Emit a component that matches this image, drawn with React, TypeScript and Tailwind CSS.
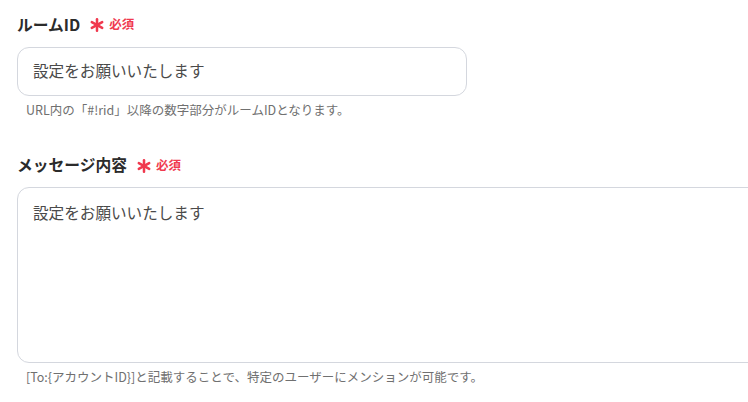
import React from "react"

const FONT = { fontFamily: '"Noto Sans CJK JP", "Noto Sans", sans-serif' }

function Required() {
  return (
    <span className="ml-[10px] flex items-center gap-[5px] text-[#f0394e]">
      <svg width="14" height="14" viewBox="0 0 14 14" className="mt-[1px]">
        <g stroke="currentColor" strokeWidth="2.5" strokeLinecap="round">
          <line x1="7" y1="1.2" x2="7" y2="12.8" />
          <line x1="1.8" y1="4.1" x2="12.2" y2="9.9" />
          <line x1="1.8" y1="9.9" x2="12.2" y2="4.1" />
        </g>
      </svg>
      <span className="text-[12.5px] font-bold">必須</span>
    </span>
  )
}

function Label({ text }: { text: string }) {
  return (
    <div className="flex items-center">
      <span className="text-[15.75px] font-bold text-[#2b2b2b]">{text}</span>
      <Required />
    </div>
  )
}

export default function App() {
  return (
    <div className="h-[402px] w-[748px] overflow-hidden bg-white" style={FONT}>
      <div className="flex flex-col pl-[17px] pt-[13px]">
        <Label text="ルームID" />
        <div className="mt-[10px] flex h-[49px] w-[450px] items-center rounded-[12px] border border-[#d4d7de] px-[15px] text-[15.6px] text-[#4a4a4a]">
          設定をお願いいたします
        </div>
        <p className="mt-[5px] pl-[9px] text-[12.5px] text-[#707070]">
          URL内の「#!rid」以降の数字部分がルームIDとなります。
        </p>
        <div className="mt-[34px]">
          <Label text="メッセージ内容" />
        </div>
        <div className="mt-[10px] h-[176px] w-[780px] rounded-[12px] border border-[#d4d7de] px-[15px] pt-[13px] text-[15.6px] text-[#4a4a4a]">
          設定をお願いいたします
        </div>
        <p className="mt-[5px] pl-[9px] text-[12.5px] text-[#707070]">
          [To:{"{"}アカウントID{"}"}]と記載することで、特定のユーザーにメンションが可能です。
        </p>
      </div>
    </div>
  )
}
